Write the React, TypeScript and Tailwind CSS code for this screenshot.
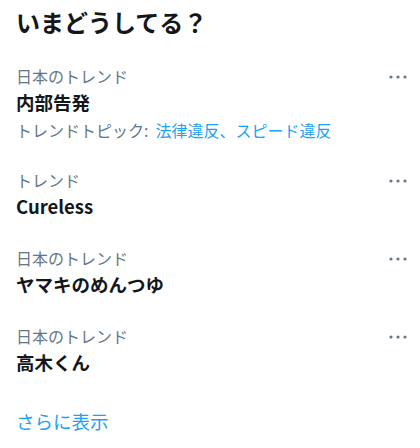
import React from "react";

const trends = [
  { meta: "日本のトレンド", name: "内部告発", topics: "法律違反、スピード違反" },
  { meta: "トレンド", name: "Cureless" },
  { meta: "日本のトレンド", name: "ヤマキのめんつゆ" },
  { meta: "日本のトレンド", name: "高木くん" },
];

function Dots() {
  return (
    <svg width="18" height="4" viewBox="0 0 18 4" className="block">
      <circle cx="2" cy="2" r="1.6" fill="#657786" />
      <circle cx="9" cy="2" r="1.6" fill="#657786" />
      <circle cx="16" cy="2" r="1.6" fill="#657786" />
    </svg>
  );
}

export default function App() {
  return (
    <div
      className="w-[420px] h-[448px] bg-white overflow-hidden"
      style={{ fontFamily: '"Noto Sans CJK JP", "Noto Sans", sans-serif' }}
    >
      <div className="pl-4 pt-[6px] h-[52px]">
        <h2 className="text-[24px] leading-[32px] font-bold text-[#14171a]">いまどうしてる？</h2>
      </div>
      {trends.map((t, i) => (
        <div key={i} className="flex pl-4 pr-[13px] py-[13px]">
          <div className="flex-1 min-w-0">
            <div className="text-[16px] leading-[22px] text-[#657786]">{t.meta}</div>
            <div className="text-[18.5px] leading-[30px] font-bold text-[#14171a]">{t.name}</div>
            {t.topics && (
              <div className="text-[16px] leading-[26px] text-[#657786]">
                トレンドトピック:<span className="ml-[7px] text-[#1da1f2]">{t.topics}</span>
              </div>
            )}
          </div>
          <div className="h-[22px] flex items-center pt-[2px]">
            <Dots />
          </div>
        </div>
      ))}
      <div className="pl-4 pt-[20px]">
        <div className="text-[18.5px] leading-[22px] text-[#1da1f2]">さらに表示</div>
      </div>
    </div>
  );
}
